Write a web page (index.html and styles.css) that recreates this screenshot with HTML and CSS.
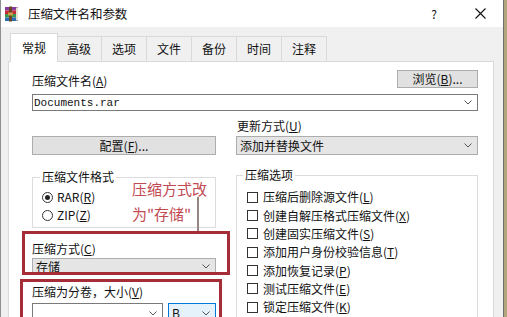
FILE: index.html
```html
<html>
<head>
<meta charset="utf-8">
<title>压缩文件名和参数</title>
<link rel="stylesheet" href="styles.css">
</head>
<body>
<div class="window">
	<div class="titlebar">
		<svg class="app-icon" width="16" height="16" viewBox="0 0 16 16">
			<rect x="1" y="1" width="13" height="3.5" fill="#8a3c9c"/>
			<rect x="1" y="4.5" width="13" height="3.5" fill="#c62a3a"/>
			<rect x="1" y="8" width="13" height="3.5" fill="#3b9848"/>
			<rect x="1" y="11.5" width="13" height="3.5" fill="#2e6db3"/>
			<rect x="12" y="1.5" width="2" height="13" fill="#e8e0d0"/>
			<rect x="5" y="0.5" width="3" height="15" fill="#6a4526"/>
			<rect x="4" y="6.5" width="5" height="3" fill="#c9a24a"/>
		</svg>
		<span class="title">压缩文件名和参数</span>
		<span class="caption-btn">?</span>
		<span class="caption-btn">
			<svg width="11" height="11" viewBox="0 0 11 11"><path d="M0.5 0.5 L10.5 10.5 M10.5 0.5 L0.5 10.5" stroke="#111" stroke-width="1.1"/></svg>
		</span>
	</div>

	<div class="tabs">
		<span class="tab active">常规</span>
		<span class="tab">高级</span>
		<span class="tab">选项</span>
		<span class="tab">文件</span>
		<span class="tab">备份</span>
		<span class="tab">时间</span>
		<span class="tab">注释</span>
	</div>

	<div class="panel">
		<div class="row-top">
			<span class="label">压缩文件名(<u>A</u>)</span>
			<span class="button browse">浏览(<u>B</u>)...</span>
		</div>
		<div class="combo file-combo">
			<span class="mono">Documents.rar</span>
			<svg class="chev" width="8" height="5" viewBox="0 0 8 5"><path d="M0.5 0.5 L4 4 L7.5 0.5" fill="none" stroke="#555"/></svg>
		</div>

		<div class="columns">
			<div class="col-left">
				<span class="button config">配置(<u>F</u>)...</span>

				<fieldset class="group format">
					<legend>压缩文件格式</legend>
					<div class="opt"><span class="radio checked"></span>RAR(<u>R</u>)</div>
					<div class="opt"><span class="radio"></span>ZIP(<u>Z</u>)</div>
				</fieldset>

				<div class="label method-label">压缩方式(<u>C</u>)</div>
				<div class="combo gray method">
					<span>存储</span>
					<svg class="chev" width="8" height="5" viewBox="0 0 8 5"><path d="M0.5 0.5 L4 4 L7.5 0.5" fill="none" stroke="#555"/></svg>
				</div>

				<div class="label split-label">压缩为分卷，大小(<u>V</u>)</div>
				<div class="split-row">
					<div class="combo split-size">
						<svg class="chev" width="8" height="5" viewBox="0 0 8 5"><path d="M0.5 0.5 L4 4 L7.5 0.5" fill="none" stroke="#555"/></svg>
					</div>
					<div class="combo unit">
						<span>B</span>
						<svg class="chev" width="8" height="5" viewBox="0 0 8 5"><path d="M0.5 0.5 L4 4 L7.5 0.5" fill="none" stroke="#555"/></svg>
					</div>
				</div>

				<!-- annotation drawn over the dialog -->
				<div class="note">压缩方式改<br>为"存储"</div>
				<div class="note-line"></div>
				<div class="mark mark-method"></div>
				<div class="mark mark-split"></div>
			</div>

			<div class="col-right">
				<div class="label">更新方式(<u>U</u>)</div>
				<div class="combo gray update">
					<span>添加并替换文件</span>
					<svg class="chev" width="8" height="5" viewBox="0 0 8 5"><path d="M0.5 0.5 L4 4 L7.5 0.5" fill="none" stroke="#555"/></svg>
				</div>

				<fieldset class="group options">
					<legend>压缩选项</legend>
					<div class="opt check"><span class="box"></span>压缩后删除源文件(<u>L</u>)</div>
					<div class="opt check"><span class="box"></span>创建自解压格式压缩文件(<u>X</u>)</div>
					<div class="opt check"><span class="box"></span>创建固实压缩文件(<u>S</u>)</div>
					<div class="opt check"><span class="box"></span>添加用户身份校验信息(<u>T</u>)</div>
					<div class="opt check"><span class="box"></span>添加恢复记录(<u>P</u>)</div>
					<div class="opt check"><span class="box"></span>测试压缩文件(<u>E</u>)</div>
					<div class="opt check"><span class="box"></span>锁定压缩文件(<u>K</u>)</div>
				</fieldset>
			</div>
		</div>
	</div>
</div>
</body>
</html>
```

FILE: styles.css
```css
body{
	margin:0;
	background:#b2a67c;
	color:#111;
	font:12px/14px "Noto Sans CJK SC",sans-serif;
}
*,:after,:before{box-sizing:border-box}
u{text-decoration-thickness:1px;text-underline-offset:1px}

.window{
	width:504px;
	height:317px;
	overflow:hidden;
	background:#f0f0f0;
	border-left:1px solid #8e8e8e;
	border-right:1px solid #6e6e6e;
}

/* title bar */
.titlebar{
	height:27px;
	background:#fff;
	display:flex;
	align-items:center;
}
.app-icon{margin:0 8px 0 3px}
.title{flex:1;font-size:12.5px;letter-spacing:-0.1px}
.caption-btn{
	width:46px;
	height:27px;
	display:flex;
	align-items:center;
	justify-content:center;
}

/* tabs */
.tabs{
	height:28px;
	margin-top:7px;
	padding-left:9px;
	display:flex;
	align-items:flex-end;
	position:relative;
	z-index:1;
	margin-bottom:-1px;
}
.tab{
	height:26px;
	padding:0 10px;
	line-height:24px;
	border:1px solid #d9d9d9;
	margin-left:-1px;
	background:#f0f0f0;
}
.tab.active{
	height:29px;
	padding:0 11px;
	margin-left:0;
	margin-right:-1px;
	line-height:28px;
	background:#fff;
	border-bottom:none;
	position:relative;
	z-index:2;
}

/* tab page */
.panel{
	height:300px;
	margin:0 9px 0 7px;
	padding:8px 15px 0 23px;
	background:#fff;
	border:1px solid #d9d9d9;
}
.row-top{
	height:18px;
	display:flex;
	justify-content:space-between;
	align-items:flex-end;
}
.button{
	display:flex;
	align-items:center;
	justify-content:center;
	background:#e1e1e1;
	border:1px solid #adadad;
}
.browse{width:81px;height:18px}
.config{width:184px;height:19px;margin-top:17px}

.combo{
	display:flex;
	align-items:center;
	justify-content:space-between;
	padding:0 5px 0 3px;
	border:1px solid #7a7a7a;
	background:#fff;
}
.combo.gray{background:#e5e5e5;border-color:#adadad}
.chev{flex:none}
.file-combo{height:17px;margin-top:6px;padding-left:1px}
.mono{font:11px/14px "Liberation Mono",monospace}

.columns{
	display:flex;
	gap:20px;
	margin-top:8px;
}
.col-left{width:184px;position:relative}
.col-right{width:242px}
.col-right > .label{padding-left:1px}
.update{height:19px;margin-top:3px}

.group{
	margin:0;
	min-width:0;
	border:1px solid #dcdcdc;
}
.group legend{line-height:16px;padding:0 2px}
.format{margin-top:14px;padding:3px 0 2px 9px;height:59px}
.format legend{margin-left:-2px}
.options{margin-top:12px;padding:5px 0 8px 10px}
.options legend{margin-left:-4px}

.opt{height:18px;display:flex;align-items:center}
.check{height:18.35px}
.radio{
	width:11px;
	height:11px;
	border:1px solid #333;
	border-radius:50%;
	margin-right:4px;
	display:flex;
	align-items:center;
	justify-content:center;
}
.radio.checked:after{
	content:'';
	width:5px;
	height:5px;
	border-radius:50%;
	background:#222;
}
.box{
	width:11px;
	height:11px;
	border:1px solid #333;
	margin-right:5px;
}

.method-label{margin-top:14px}
.method{height:17px;margin-top:2px}
.split-label{margin-top:10px}
.split-row{display:flex;gap:5px;margin-top:4px}
.split-size{width:131px;height:20px;justify-content:flex-end}
.unit{width:48px;height:20px;background:#e5f1fb;border-color:#0078d7}

/* red annotation */
.note{
	position:absolute;
	left:100px;
	top:57px;
	font-size:15px;
	line-height:25px;
	color:#c24a52;
}
.note-line{
	position:absolute;
	left:165px;
	top:78px;
	width:2px;
	height:35px;
	background:#958585;
}
.mark{
	position:absolute;
	border:3px solid #a62c37;
}
.mark-method{left:-10px;top:112px;width:208px;height:44px}
.mark-split{left:-12px;top:160px;width:202px;height:60px}
```
